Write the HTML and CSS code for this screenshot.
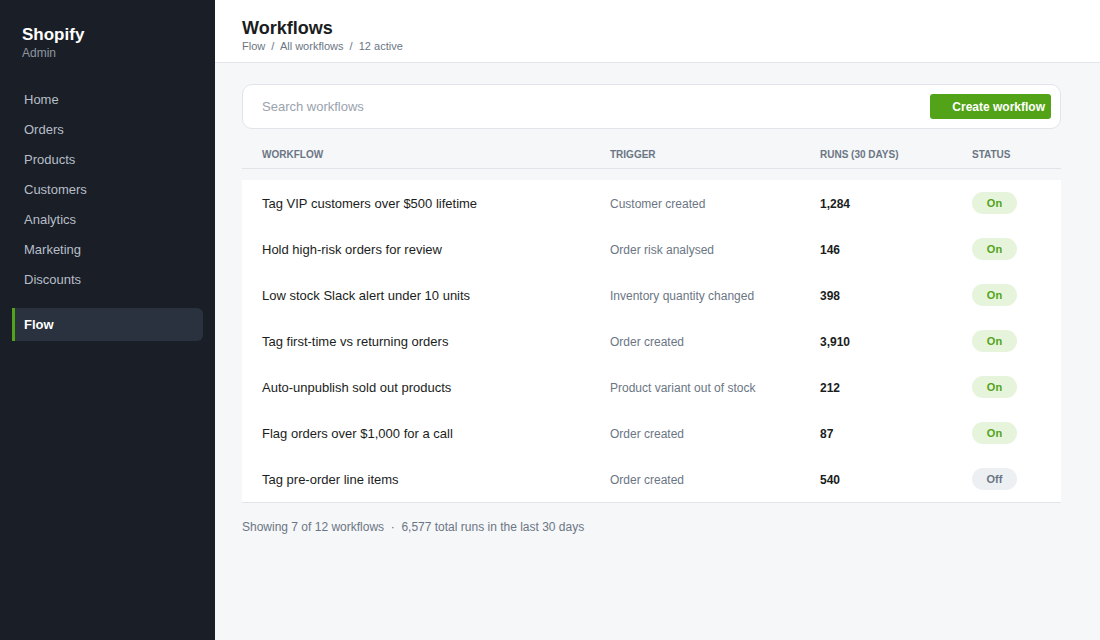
FILE: index.html
```html
<!DOCTYPE html>
<html lang="en">
<head>
  <meta charset="UTF-8">
  <meta name="viewport" content="width=device-width, initial-scale=1.0">
  <title>Workflows - Flow</title>
  <link rel="stylesheet" href="styles.css">
</head>
<body>
  <div class="app">
    <aside class="sidebar">
      <div class="brand">
        <div class="brand-name">Shopify</div>
        <div class="brand-sub">Admin</div>
      </div>
      <nav class="nav">
        <a class="nav-item">Home</a>
        <a class="nav-item">Orders</a>
        <a class="nav-item">Products</a>
        <a class="nav-item">Customers</a>
        <a class="nav-item">Analytics</a>
        <a class="nav-item">Marketing</a>
        <a class="nav-item">Discounts</a>
      </nav>
      <div class="nav-active">Flow</div>
    </aside>

    <main class="main">
      <header class="page-header">
        <h1>Workflows</h1>
        <div class="breadcrumb">Flow &nbsp;/&nbsp; All workflows &nbsp;/&nbsp; 12 active</div>
      </header>

      <section class="content">
        <div class="toolbar">
          <input class="search" type="text" placeholder="Search workflows">
          <button class="create-button" type="button">Create workflow</button>
        </div>

        <div class="table-head">
          <div>Workflow</div>
          <div>Trigger</div>
          <div>Runs (30 days)</div>
          <div>Status</div>
        </div>

        <div class="table-body">
          <div class="row">
            <div class="name">Tag VIP customers over $500 lifetime</div>
            <div class="trigger">Customer created</div>
            <div class="runs">1,284</div>
            <div class="status"><span class="badge on">On</span></div>
          </div>
          <div class="row">
            <div class="name">Hold high-risk orders for review</div>
            <div class="trigger">Order risk analysed</div>
            <div class="runs">146</div>
            <div class="status"><span class="badge on">On</span></div>
          </div>
          <div class="row">
            <div class="name">Low stock Slack alert under 10 units</div>
            <div class="trigger">Inventory quantity changed</div>
            <div class="runs">398</div>
            <div class="status"><span class="badge on">On</span></div>
          </div>
          <div class="row">
            <div class="name">Tag first-time vs returning orders</div>
            <div class="trigger">Order created</div>
            <div class="runs">3,910</div>
            <div class="status"><span class="badge on">On</span></div>
          </div>
          <div class="row">
            <div class="name">Auto-unpublish sold out products</div>
            <div class="trigger">Product variant out of stock</div>
            <div class="runs">212</div>
            <div class="status"><span class="badge on">On</span></div>
          </div>
          <div class="row">
            <div class="name">Flag orders over $1,000 for a call</div>
            <div class="trigger">Order created</div>
            <div class="runs">87</div>
            <div class="status"><span class="badge on">On</span></div>
          </div>
          <div class="row">
            <div class="name">Tag pre-order line items</div>
            <div class="trigger">Order created</div>
            <div class="runs">540</div>
            <div class="status"><span class="badge off">Off</span></div>
          </div>
        </div>

        <p class="summary">Showing 7 of 12 workflows &nbsp;&middot;&nbsp; 6,577 total runs in the last 30 days</p>
      </section>
    </main>
  </div>
</body>
</html>
```

FILE: styles.css
```css
* {
  box-sizing: border-box;
}

body {
  margin: 0;
  font-family: "Liberation Sans", Arial, sans-serif;
  background-color: #f6f7f9;
  color: #1a1d21;
}

.app {
  display: flex;
  height: 640px;
}

.sidebar {
  width: 215px;
  flex-shrink: 0;
  background-color: #1a1f27;
  padding: 25px 12px 0 12px;
}

.brand {
  padding-left: 10px;
}

.brand-name {
  color: #ffffff;
  font-size: 17px;
  font-weight: bold;
  line-height: 20px;
}

.brand-sub {
  color: #8d96a1;
  font-size: 12px;
  line-height: 16px;
}

.nav {
  margin-top: 24px;
  display: flex;
  flex-direction: column;
}

.nav-item {
  display: block;
  padding-left: 12px;
  height: 30px;
  line-height: 30px;
  font-size: 13px;
  color: #b7bec8;
}

.nav-active {
  margin-top: 13px;
  height: 33px;
  line-height: 33px;
  padding-left: 9px;
  border-left: 3px solid #52a318;
  border-radius: 0 6px 6px 0;
  background-color: #29323e;
  color: #ffffff;
  font-size: 13px;
  font-weight: bold;
}

.main {
  flex: 1;
  display: flex;
  flex-direction: column;
}

.page-header {
  background-color: #ffffff;
  height: 63px;
  padding: 17px 27px 0 27px;
  border-bottom: 1px solid #e1e5ea;
}

.page-header h1 {
  margin: 0;
  font-size: 18px;
  line-height: 22px;
  color: #1a1d21;
}

.breadcrumb {
  margin-top: 0;
  font-size: 11px;
  line-height: 14px;
  color: #6b7684;
}

.content {
  padding: 21px 39px 0 27px;
}

.toolbar {
  display: flex;
  align-items: center;
  height: 45px;
  background-color: #ffffff;
  border: 1px solid #e1e5ea;
  border-radius: 10px;
  padding: 0 9px 0 19px;
}

.search {
  flex: 1;
  border: none;
  outline: none;
  background: transparent;
  font-family: inherit;
  font-size: 13px;
  color: #1a1d21;
  padding: 0;
}

.search::placeholder {
  color: #9aa2ad;
}

.create-button {
  height: 25px;
  background-color: #52a318;
  color: #ffffff;
  border: none;
  border-radius: 3px;
  font-family: inherit;
  font-size: 12px;
  font-weight: bold;
  padding: 0 6px 0 22px;
  cursor: pointer;
}

.table-head,
.row {
  display: grid;
  grid-template-columns: 348px 210px 152px 1fr;
  align-items: center;
  padding-left: 20px;
}

.table-head {
  margin-top: 13px;
  height: 27px;
  border-bottom: 1px solid #e1e5ea;
  font-size: 10px;
  font-weight: bold;
  text-transform: uppercase;
  color: #6b7684;
  padding-bottom: 2px;
}

.table-body {
  margin-top: 11px;
  background-color: #ffffff;
  border-bottom: 1px solid #e1e5ea;
}

.row {
  height: 46px;
  font-size: 13px;
}

.name {
  color: #1a1d21;
}

.trigger {
  font-size: 12px;
  color: #6b7684;
  padding-top: 2px;
}

.runs {
  font-size: 12px;
  font-weight: bold;
  color: #1a1d21;
  padding-top: 2px;
}

.status {
  display: flex;
}

.badge {
  display: inline-block;
  width: 45px;
  height: 22px;
  line-height: 23px;
  border-radius: 11px;
  text-align: center;
  font-size: 11px;
  font-weight: bold;
}

.badge.on {
  background-color: #e7f4dc;
  color: #52a31a;
}

.badge.off {
  background-color: #edf0f3;
  color: #6b7684;
}

.summary {
  margin: 17px 0 0 0;
  font-size: 12px;
  color: #6b7684;
}
```
